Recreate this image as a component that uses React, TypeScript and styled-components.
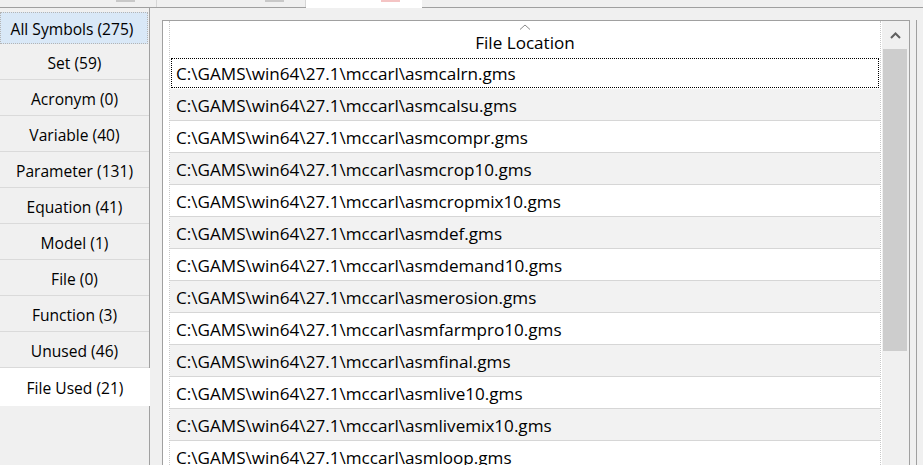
import React from "react"
import styled, { createGlobalStyle } from "styled-components"

const GlobalStyle = createGlobalStyle`
  html, body {
    margin: 0;
    padding: 0;
    background: #f0f0f0;
    overflow: hidden;
  }
  * {
    box-sizing: border-box;
  }
`

const Window = styled.div`
  width: 923px;
  height: 465px;
  display: flex;
  flex-direction: column;
  background: #f0f0f0;
  font-family: "Open Sans", "Noto Sans", sans-serif;
  font-size: 15.6px;
  color: #000;
  overflow: hidden;
`

const TabStrip = styled.div`
  height: 8px;
  display: flex;
  flex-shrink: 0;
  border-bottom: 1px solid #a0a0a0;
`

interface TabProps {
  $width: string
  $active?: boolean
}

const Tab = styled.div<TabProps>`
  width: ${props => props.$width};
  display: flex;
  justify-content: flex-end;
  padding-right: 21px;
  border-right: 1px solid ${props => props.$active ? "transparent" : "#d6d6d6"};
  background: ${props => props.$active ? "#fff" : "transparent"};
  margin-bottom: ${props => props.$active ? "-1px" : "0"};
`

const TabIcon = styled.div<{ $color: string }>`
  width: 19px;
  height: 2px;
  background: ${props => props.$color};
`

const Body = styled.div`
  flex: 1;
  display: flex;
  min-height: 0;
`

const Sidebar = styled.div`
  width: 150px;
  flex-shrink: 0;
  display: flex;
  flex-direction: column;
  border-right: 1px solid #a0a0a0;
  padding-top: 4px;
`

interface SideItemProps {
  $state?: "hover" | "active"
  $height?: number
}

const SideItem = styled.div<SideItemProps>`
  height: ${props => props.$height || 36}px;
  display: flex;
  align-items: center;
  justify-content: center;
  padding-top: 2px;
  white-space: nowrap;
  border-bottom: 1px solid #dadada;
  ${props => props.$state === "hover" && `
    background: #d9e8f7;
    border: 1px dotted #b4b4b4;
    margin-right: 1px;
    padding-right: 4px;
  `}
  ${props => props.$state === "active" && `
    background: #fff;
    border-bottom: none;
    margin-right: -1px;
    position: relative;
  `}
`

const Main = styled.div`
  flex: 1;
  display: flex;
  padding: 12px 0 0 12px;
  min-width: 0;
`

const TableBox = styled.div`
  width: 748px;
  display: flex;
  border: 1px solid #a0a0a0;
  border-bottom: none;
  background: #fff;
`

const Grid = styled.div`
  flex: 1;
  display: flex;
  flex-direction: column;
  padding-left: 6px;
  font-size: 17.1px;
`

const GridInner = styled.div`
  flex: 1;
  border-left: 1px dotted #c8c8c8;
  border-right: 1px dotted #c8c8c8;
  margin-right: 1px;
`

const HeaderCell = styled.div`
  height: 36px;
  position: relative;
  display: flex;
  align-items: flex-end;
  justify-content: center;
  padding-bottom: 3px;
`

const SortArrow = styled.svg`
  position: absolute;
  top: 3px;
  left: 50%;
  margin-left: -6px;
`

interface RowProps {
  $alt?: boolean
  $focused?: boolean
}

const Row = styled.div<RowProps>`
  height: 32px;
  display: flex;
  align-items: center;
  padding: 1px 0 0 6px;
  white-space: nowrap;
  background: ${props => props.$alt ? "#f2f2f2" : "#fff"};
  border-bottom: 1px solid #d6d6d6;
  ${props => props.$focused && `
    outline: 1px dotted #000;
    outline-offset: -2px;
    border-bottom-color: transparent;
  `}
`

const Scrollbar = styled.div`
  width: 27px;
  display: flex;
  flex-direction: column;
  background: #f0f0f0;
  padding: 0 2px 0 1px;
`

const ScrollButton = styled.div`
  height: 28px;
  display: flex;
  align-items: center;
  justify-content: center;
`

const ScrollThumb = styled.div`
  height: 302px;
  background: #cdcdcd;
`

const RightStub = styled.div`
  width: 6px;
  margin-left: 6px;
  border-left: 1px solid #a0a0a0;
`

const files = [
  "asmcalrn", "asmcalsu", "asmcompr", "asmcrop10", "asmcropmix10", "asmdef",
  "asmdemand10", "asmerosion", "asmfarmpro10", "asmfinal", "asmlive10",
  "asmlivemix10", "asmloop",
]

const symbols = [
  "Set (59)", "Acronym (0)", "Variable (40)", "Parameter (131)", "Equation (41)",
  "Model (1)", "File (0)", "Function (3)", "Unused (46)",
]

export default function App() {
  return (
    <Window>
      <GlobalStyle />
      <TabStrip>
        <Tab $width="157px"><TabIcon $color="#c8c8c8" /></Tab>
        <Tab $width="149px"><TabIcon $color="#c8c8c8" /></Tab>
        <Tab $width="116px" $active><TabIcon $color="#f4c4c4" /></Tab>
      </TabStrip>
      <Body>
        <Sidebar>
          <SideItem $state="hover" $height={32}>All Symbols (275)</SideItem>
          {symbols.map(s => <SideItem key={s}>{s}</SideItem>)}
          <SideItem $state="active" $height={38}>File Used (21)</SideItem>
        </Sidebar>
        <Main>
          <TableBox>
            <Grid>
              <GridInner>
                <HeaderCell>
                  <SortArrow width="12" height="6" viewBox="0 0 12 6">
                    <path d="M1 5.5 L6 1 L11 5.5" fill="none" stroke="#8a8a8a" strokeWidth="1" />
                  </SortArrow>
                  File Location
                </HeaderCell>
                {files.map((f, i) => (
                  <Row key={f} $alt={i % 2 === 1} $focused={i === 0}>
                    C:\GAMS\win64\27.1\mccarl\{f}.gms
                  </Row>
                ))}
              </GridInner>
            </Grid>
            <Scrollbar>
              <ScrollButton>
                <svg width="11" height="7" viewBox="0 0 11 7">
                  <path d="M1 6 L5.5 1.5 L10 6" fill="none" stroke="#606060" strokeWidth="2" />
                </svg>
              </ScrollButton>
              <ScrollThumb />
            </Scrollbar>
          </TableBox>
          <RightStub />
        </Main>
      </Body>
    </Window>
  )
}
